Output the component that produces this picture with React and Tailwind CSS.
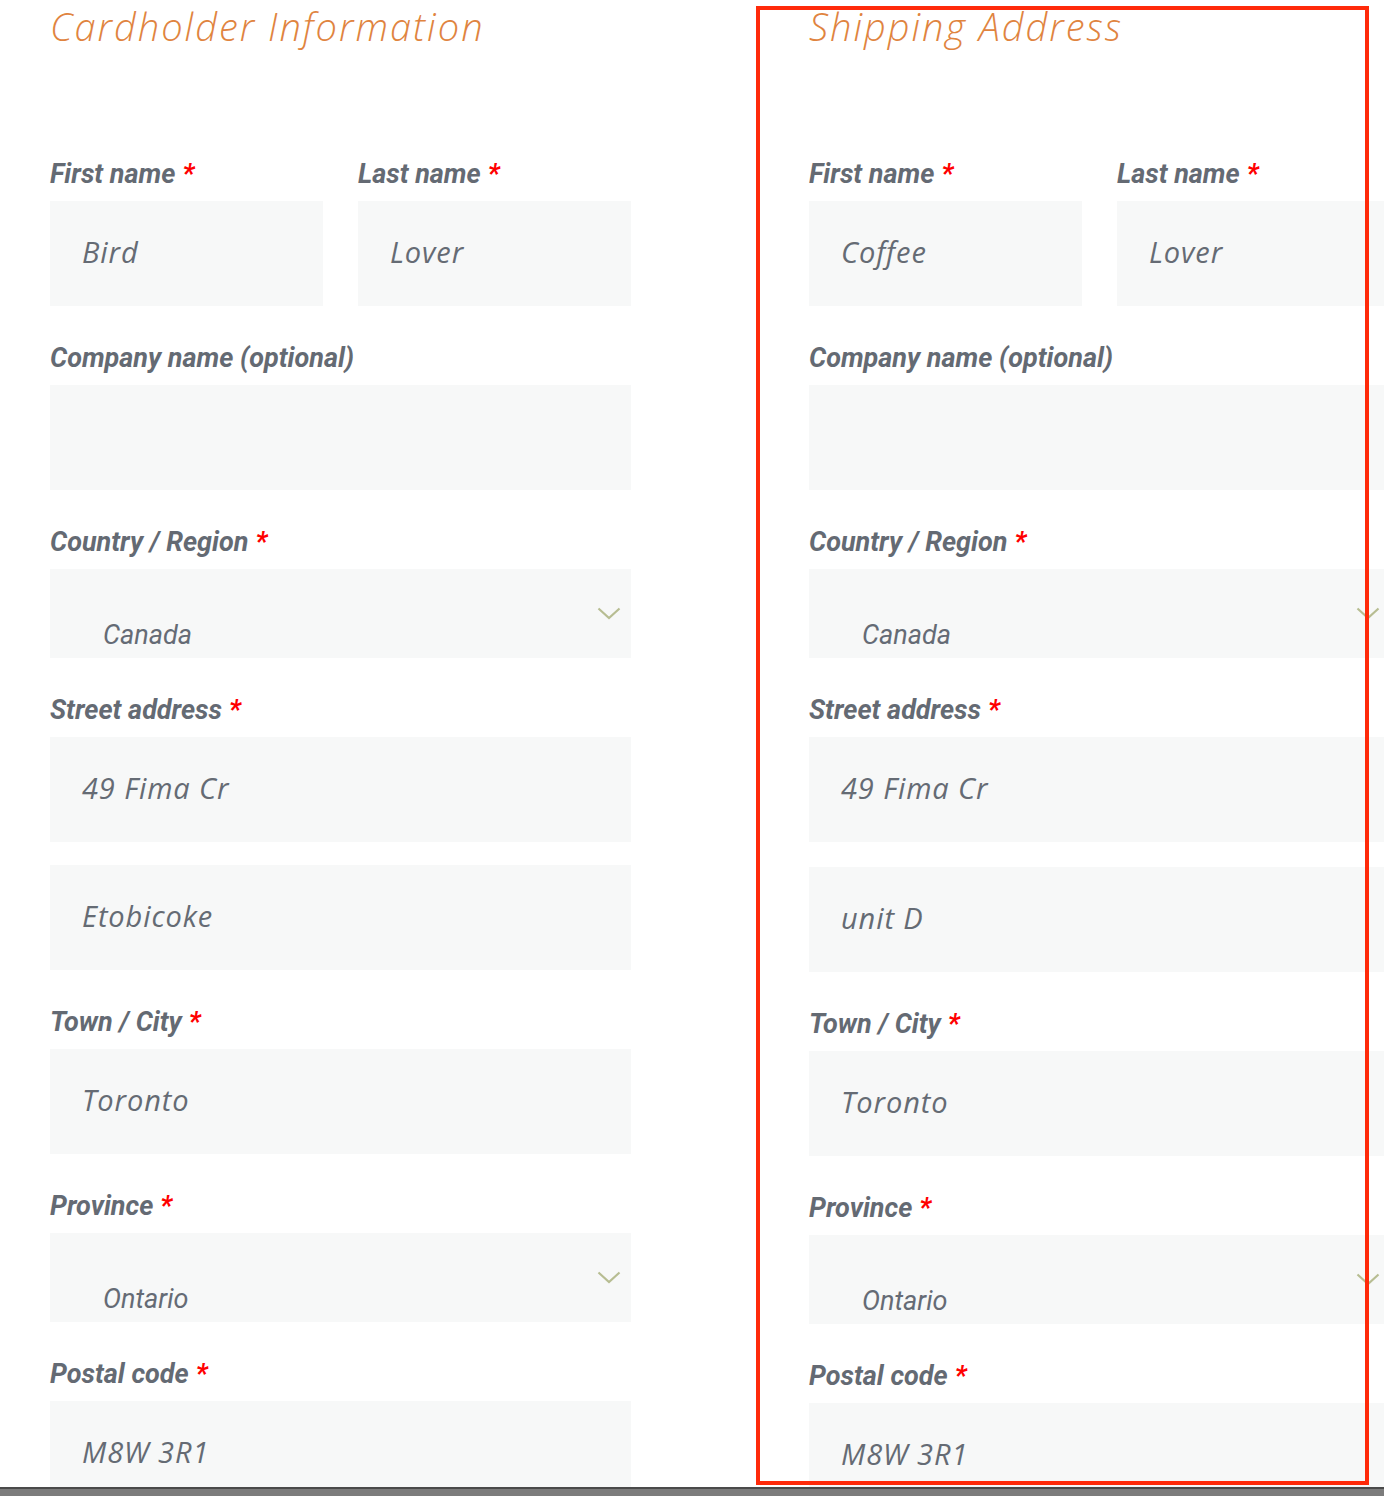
import React from 'react';

const labelFont = { fontFamily: 'Roboto, "Liberation Sans", sans-serif' };
const inputFont = { fontFamily: '"Open Sans", "Liberation Sans", sans-serif' };
const titleFont = { fontFamily: '"Open Sans", "Liberation Sans", sans-serif' };

const Label = ({ children, required = true }) => (
  <div
    className="h-[30px] mb-[12px] text-[27px] leading-[30px] font-bold italic text-[#646a73] whitespace-nowrap"
    style={labelFont}
  >
    {children}
    {required && <span className="text-[#ff0000] ml-[7px]">*</span>}
  </div>
);

const TextInput = ({ value }) => (
  <div
    className="h-[105px] bg-[#f7f8f8] pl-[32px] pb-[3px] flex items-center text-[29px] tracking-[0.9px] italic text-[#656b74] whitespace-nowrap"
    style={inputFont}
  >
    {value}
  </div>
);

const Chevron = () => (
  <svg width="24" height="13" viewBox="0 0 24 13" fill="none">
    <path d="M1.5 1.5 L12 11 L22.5 1.5" stroke="#b7bd92" strokeWidth="2.2" />
  </svg>
);

const Select = ({ value }) => (
  <div className="h-[89px] bg-[#f7f8f8] relative">
    <div
      className="absolute left-[53px] top-[49px] text-[27px] leading-[34px] italic text-[#656b75]"
      style={labelFont}
    >
      {value}
    </div>
    <div className="absolute right-[10px] top-[38px]">
      <Chevron />
    </div>
  </div>
);

const Field = ({ label, required = true, children, className = '' }) => (
  <div className={`mb-[37px] ${className}`}>
    <Label required={required}>{label}</Label>
    {children}
  </div>
);

const Column = ({ title, data, offset }) => (
  <div className="w-[581px] shrink-0">
    <h2
      className="text-[38px] leading-[44px] font-light italic text-[#e0843f] tracking-[2px] mt-[4px] mb-[111px] whitespace-nowrap"
      style={titleFont}
    >
      {title}
    </h2>
    <div className="grid grid-cols-2 gap-[35px]">
      <Field label="First name">
        <TextInput value={data.first} />
      </Field>
      <Field label="Last name">
        <TextInput value={data.last} />
      </Field>
    </div>
    <Field label="Company name (optional)" required={false}>
      <TextInput value="" />
    </Field>
    <Field label="Country / Region">
      <Select value="Canada" />
    </Field>
    <Field label="Street address">
      <TextInput value="49 Fima Cr" />
      <div className={offset ? 'mt-[25px]' : 'mt-[23px]'}>
        <TextInput value={data.street2} />
      </div>
    </Field>
    <Field label="Town / City">
      <TextInput value="Toronto" />
    </Field>
    <Field label="Province">
      <Select value="Ontario" />
    </Field>
    <Field label="Postal code">
      <TextInput value="M8W 3R1" />
    </Field>
  </div>
);

export default function App() {
  return (
    <div className="w-[1384px] h-[1496px] bg-white overflow-hidden flex flex-col relative">
      <div className="flex-1 overflow-hidden flex gap-[178px] pl-[50px]">
        <Column title="Cardholder Information" data={{ first: 'Bird', last: 'Lover', street2: 'Etobicoke' }} />
        <Column title="Shipping Address" data={{ first: 'Coffee', last: 'Lover', street2: 'unit D' }} offset />
      </div>
      <div className="h-[9px] shrink-0 border-t-2 border-[#4a4a4a] bg-[#7c7c7c]" />
      <div className="absolute left-[756px] top-[6px] w-[613px] h-[1479px] border-4 border-[#ff2a0a] pointer-events-none" />
    </div>
  );
}
